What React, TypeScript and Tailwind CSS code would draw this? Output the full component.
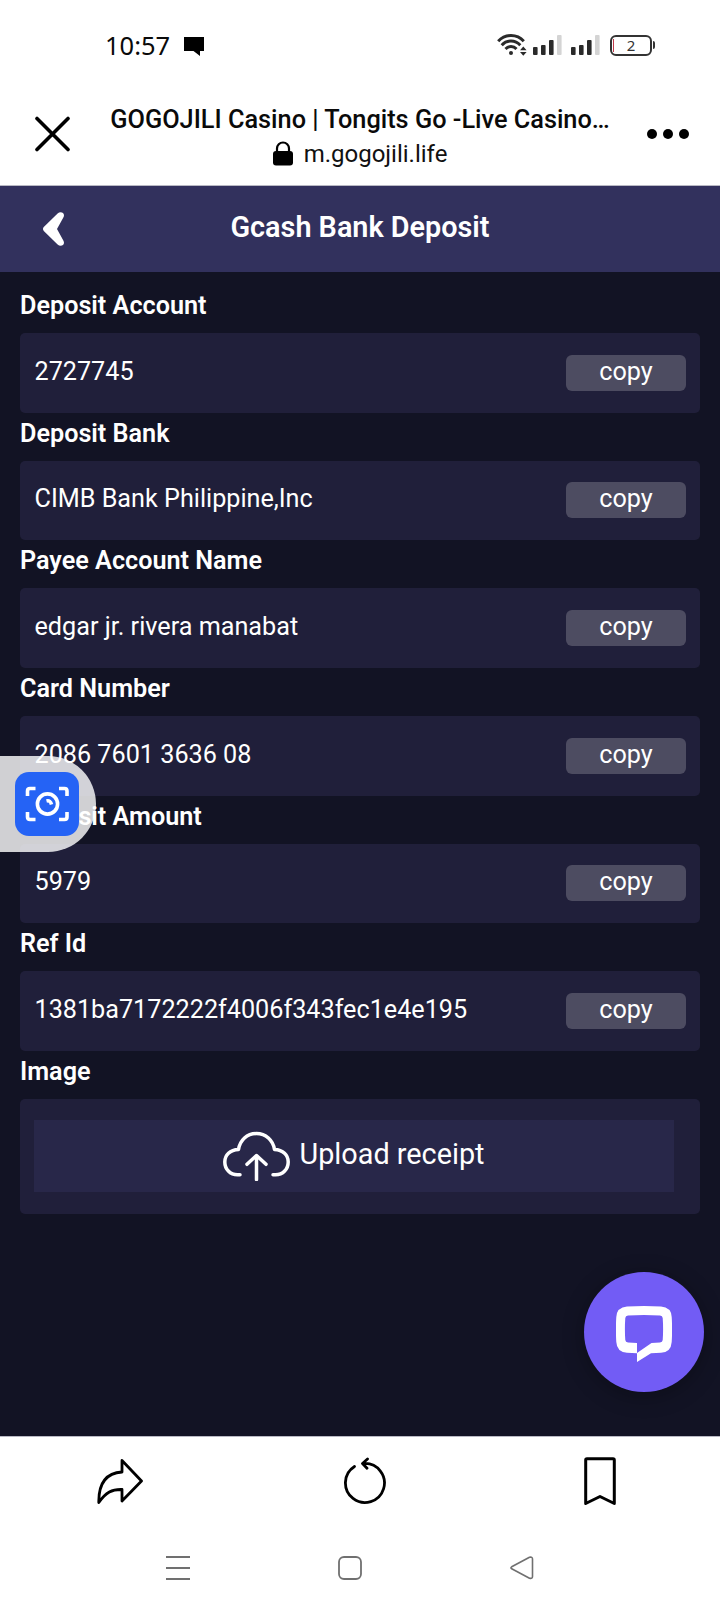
import React from "react";

const fields = [
  { label: "Deposit Account", value: "2727745" },
  { label: "Deposit Bank", value: "CIMB Bank Philippine,Inc" },
  { label: "Payee Account Name", value: "edgar jr. rivera manabat" },
  { label: "Card Number", value: "2086 7601 3636 08" },
  { label: "Deposit Amount", value: "5979" },
  { label: "Ref Id", value: "1381ba7172222f4006f343fec1e4e195" },
];

function SignalBars() {
  return (
    <svg width="29" height="20" viewBox="0 0 29 20">
      <rect x="0" y="12" width="4.6" height="8" rx="1" fill="#2a2a2a" />
      <rect x="8" y="10" width="4.6" height="10" rx="1" fill="#2a2a2a" />
      <rect x="16" y="5" width="4.6" height="15" rx="1" fill="#2a2a2a" />
      <rect x="24" y="0" width="4.6" height="20" rx="1" fill="#d4d4d4" />
    </svg>
  );
}

function StatusBar() {
  return (
    <div className="flex h-[90px] items-center pl-[105px] pr-[65px]">
      <span className="w-[79px] text-[25.5px] leading-[30px] whitespace-nowrap text-[#0a0a0a] font-['Noto_Sans',sans-serif]">10:57</span>
      <svg className="mt-0.5" width="20" height="19" viewBox="0 0 20 19">
        <path d="M0 0H20V14H16V19L9.5 14H0Z" fill="#000" />
      </svg>
      <div className="ml-auto flex items-center">
        <svg width="30" height="24" viewBox="0 0 30 24" fill="none" stroke="#2a2a2a" strokeWidth="2.9">
          <path d="M1.2 8.3C8 .6 20 .6 26.8 8.3" />
          <path d="M4.7 12.2C9.7 6.6 18.3 6.6 23.3 12.2" />
          <path d="M8.5 16C11.5 12.6 16.5 12.6 19.5 16" />
          <circle cx="14" cy="20" r="2" fill="#2a2a2a" stroke="none" />
          <path d="M23 17.2L26.3 13.4L29.6 17.2ZM23 19L26.3 22.8L29.6 19Z" fill="#2a2a2a" stroke="none" />
        </svg>
        <div className="ml-[6px] flex gap-[9px]">
          <SignalBars />
          <SignalBars />
        </div>
        <div className="ml-[10px] flex items-center">
          <div className="relative flex h-[21px] w-[42px] items-center justify-center rounded-[6px] border-2 border-[#333]">
            <span className="absolute left-[1px] top-[2px] h-[13px] w-px bg-[#c23a4a]" />
            <span className="text-[15px] leading-none text-[#333] font-['Noto_Sans',sans-serif]">2</span>
          </div>
          <span className="ml-px h-[8px] w-[2px] rounded-r-sm bg-[#333]" />
        </div>
      </div>
    </div>
  );
}

function BrowserBar() {
  return (
    <div className="flex h-[96px] border-b border-[#b9b9c4] pl-[35px] pr-[31px]">
      <svg className="mt-[26px]" width="35" height="36" viewBox="0 0 35 36" fill="none" stroke="#000" strokeWidth="3.6" strokeLinecap="round">
        <path d="M2 2.5L33 33.5M33 2.5L2 33.5" />
      </svg>
      <div className="flex w-[580px] flex-col items-center pt-[13px]">
        <div className="text-[25.3px] leading-[34px] font-medium whitespace-nowrap text-[#0a0a0a]">GOGOJILI Casino | Tongits Go -Live Casino…</div>
        <div className="flex items-center">
          <svg className="mt-[-2px]" width="20" height="25" viewBox="0 0 20 25">
            <path d="M4 11V7.5a6 6 0 0 1 12 0V11" fill="none" stroke="#000" strokeWidth="2.2" />
            <rect x="0" y="10" width="20" height="14.5" rx="3" fill="#000" />
          </svg>
          <span className="ml-[11px] text-[24px] leading-[34px] text-[#111]">m.gogojili.life</span>
        </div>
      </div>
      <svg className="mt-[39px] ml-[-3px] shrink-0" width="42" height="10" viewBox="0 0 42 10">
        <circle cx="5" cy="5" r="5" />
        <circle cx="21" cy="5" r="5" />
        <circle cx="37" cy="5" r="5" />
      </svg>
    </div>
  );
}

function PageHeader() {
  return (
    <header className="grid h-[86px] grid-cols-[100px_1fr_100px] items-center bg-[#32315d]">
      <svg className="ml-[43px]" width="21" height="34" viewBox="0 0 21 34">
        <path d="M.8 15L14.6 1.4C17.2-1 21 .3 21 3.2C21 4.3 20.6 5 20.2 5.7L14 17L20.2 28.3C20.6 29 21 29.8 21 30.8C21 33.7 17.2 35 14.6 32.6L.8 19C-.3 17.8-.3 16.2.8 15Z" fill="#fff" />
      </svg>
      <h1 className="mt-[-3px] text-center text-[28.8px] leading-none font-semibold text-white">Gcash Bank Deposit</h1>
    </header>
  );
}

function Field({ label, value }: { label: string; value: string }) {
  return (
    <div>
      <div className="h-[48px] pt-[4px] text-[25.2px] leading-[34px] font-semibold">{label}</div>
      <div className="flex h-[79.66px] items-center rounded-[5px] bg-[#201f3a] pr-[14px] pl-[14.5px]">
        <span className="mt-[-2px] text-[25.2px] leading-[34px]">{value}</span>
        <button className="ml-auto h-[36px] w-[120px] rounded-[6px] bg-[#4d4c61] pb-[2px] text-[25.2px] leading-[34px]">copy</button>
      </div>
    </div>
  );
}

function UploadSection() {
  return (
    <div>
      <div className="h-[48px] pt-[4px] text-[25.2px] leading-[34px] font-semibold">Image</div>
      <div className="h-[115px] rounded-[5px] bg-[#201f3a] pt-[21px] pl-[14px]">
        <button className="flex h-[72px] w-[640px] items-center justify-center bg-[#282749]">
          <svg className="shrink-0" width="67" height="50" viewBox="225 1130.500 67 50" fill="none" stroke="#fff" strokeWidth="3.5" strokeLinecap="round" strokeLinejoin="round">
            <path d="M242 1174.300H239.500C232 1174.300 226.800 1168.500 226.800 1161.500C226.800 1154.500 232 1149.300 240.500 1149C242 1139.500 249 1133 258.400 1133C267.800 1133 275 1139.500 276.500 1149C285 1149.300 290.200 1154.500 290.200 1161.500C290.200 1168.500 285 1174.300 277.500 1174.300H275" />
            <path d="M258.500 1179V1155M249 1163.800L258.500 1155L268 1163.800" />
          </svg>
          <span className="mt-[-3px] ml-[9px] text-[28.8px] leading-none">Upload receipt</span>
        </button>
      </div>
    </div>
  );
}

function ScanWidget() {
  return (
    <div className="absolute top-[756px] left-0 flex h-[96px] w-[96px] items-center rounded-r-full bg-white/80 pl-[15px]">
      <div className="flex size-[64px] items-center justify-center rounded-[14px] bg-[#2563f5]">
        <svg width="44" height="36" viewBox="0 0 44 36" fill="none" stroke="#fff" strokeWidth="3.6">
          <path d="M2.500 10V5Q2.500 2.500 5 2.500H10.500M34 2.500H39.500Q42 2.500 42 5V10M42 26V31Q42 33.500 39.500 33.500H34M10.500 33.500H5Q2.500 33.500 2.500 31V26" />
          <circle cx="22.500" cy="18" r="10.100" />
          <path d="M21.500 15Q25.500 14 26.500 18.500" />
        </svg>
      </div>
    </div>
  );
}

function ChatButton() {
  return (
    <button className="absolute top-[1272px] left-[584px] flex size-[120px] items-center justify-center rounded-full bg-[#725cf5] shadow-[0_4px_22px_rgba(0,0,0,0.3)]">
      <svg className="mt-[4px]" width="56" height="56" viewBox="616 1306 56 56">
        <path
          fill="#fff"
          fillRule="evenodd"
          d="M627 1306.600Q644 1305.400 661 1306.600Q671.300 1307.500 671.700 1317Q672.500 1329.500 671.700 1342Q671 1352.300 661 1352.800L651 1353.300L637 1362V1353.200L627 1352.800Q616.800 1352 616.300 1342Q615.500 1329.500 616.300 1317Q616.800 1307.500 627 1306.600ZM628 1315.500Q644 1314.500 660 1315.500Q662.500 1315.700 662.700 1318Q663.500 1329 662.700 1340Q662.500 1342.300 660 1342.500L651.500 1343L637 1353V1343L628 1342.500Q625.500 1342.300 625.300 1340Q624.500 1329 625.300 1318Q625.500 1315.700 628 1315.500Z"
        />
      </svg>
    </button>
  );
}

function BottomToolbar() {
  return (
    <div className="flex h-[96px] justify-between border-t border-[#b9b9c4] pr-[104px] pl-[97px]">
      <svg className="mt-[21px]" width="46" height="47" viewBox="0 0 46 47" fill="none" stroke="#000" strokeWidth="2.800" strokeLinejoin="round">
        <path d="M25 2.500L44.500 23L25 43V31.500C15 31.200 9 34 1.800 44.500C1.500 26 9 15 25 14Z" />
      </svg>
      <svg className="mt-[20px] ml-[4px]" width="44" height="48" viewBox="0 0 44 48" fill="none" stroke="#000" strokeWidth="2.800" strokeLinecap="round" strokeLinejoin="round">
        <path d="M10.500 9.500A19.500 19.500 0 1 0 20 6.500M23.500 2L18.500 6.500L23 11.300" />
      </svg>
      <svg className="mt-[20px]" width="32" height="49" viewBox="0 0 32 49" fill="none" stroke="#000" strokeWidth="3" strokeLinejoin="round">
        <path d="M3 1.800H29Q30.300 1.800 30.300 3V46.500L16 39.500L1.700 46.500V3Q1.700 1.800 3 1.800Z" />
      </svg>
    </div>
  );
}

function SystemNav() {
  return (
    <div className="flex h-[80px] items-start pt-[23px] pl-[166px]">
      <svg className="mt-px" width="24" height="25" viewBox="0 0 24 25" stroke="#707070" strokeWidth="2">
        <path d="M0 1H24M0 12H24M0 23H24" />
      </svg>
      <svg className="ml-[148px] mt-px" width="24" height="24" viewBox="0 0 24 24" fill="none" stroke="#707070" strokeWidth="1.800">
        <rect x="1" y="1" width="22" height="22" rx="5" />
      </svg>
      <svg className="ml-[148px] mt-px" width="24" height="24" viewBox="0 0 24 24" fill="none" stroke="#707070" strokeWidth="1.600" strokeLinejoin="round">
        <path d="M1.700 10.800L19.500 1.300Q22.500.5 22.500 3V20.500Q22.500 23 19.500 22.200L1.700 12.800Q.2 11.800 1.700 10.800Z" />
      </svg>
    </div>
  );
}

export default function App() {
  return (
    <div className="relative flex h-[1612px] w-[720px] flex-col overflow-hidden bg-white font-[Roboto,sans-serif]">
      <StatusBar />
      <BrowserBar />
      <PageHeader />
      <main className="h-[1164px] bg-[#121324] px-[20px] pt-[13px] text-white">
        {fields.map((f) => (
          <Field key={f.label} label={f.label} value={f.value} />
        ))}
        <UploadSection />
      </main>
      <BottomToolbar />
      <SystemNav />
      <ScanWidget />
      <ChatButton />
    </div>
  );
}
